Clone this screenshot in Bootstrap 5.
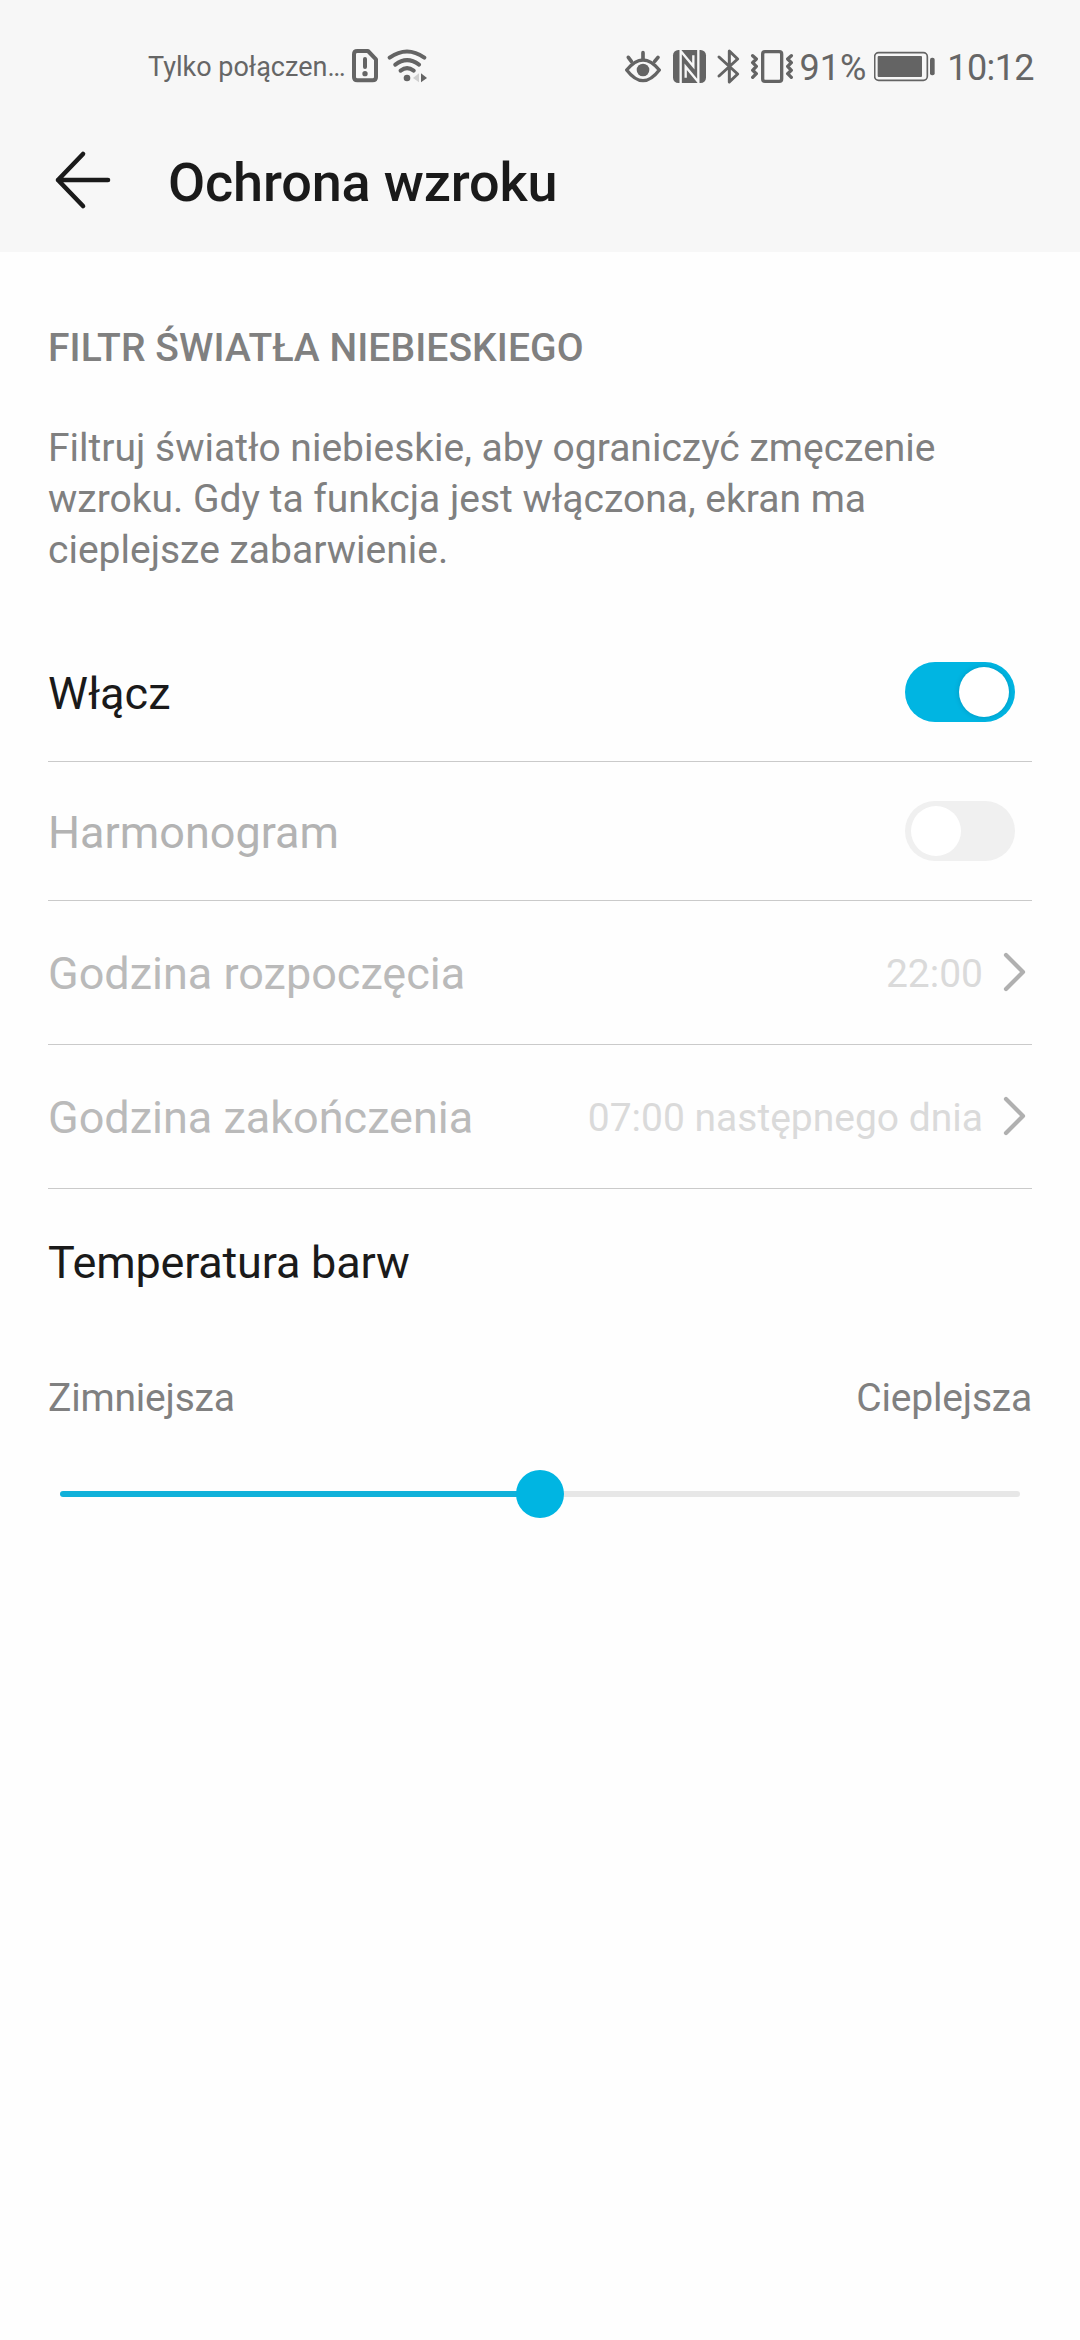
<!DOCTYPE html>
<html lang="pl">
<head>
<meta charset="utf-8">
<meta name="viewport" content="width=device-width, initial-scale=1">
<title>Ochrona wzroku</title>
<link href="https://cdn.jsdelivr.net/npm/bootstrap@5.3.0/dist/css/bootstrap.min.css" rel="stylesheet">
<style>
  body { font-family: Roboto, "Liberation Sans", sans-serif; background: #fefefe; color: #1a1a1a; min-height: 2340px; }
  svg { display: block; flex: none; }
  .app-head { background: #f7f7f7; height: 252px; padding-top: 30px; }
  .status { height: 70px; padding: 0 46px 0 148px; color: #666; }
  .status svg { color: #646464; }
  .operator { font-size: 27px; line-height: 32px; padding-top: 4px; width: 204px; white-space: nowrap; }
  .digits { font-size: 36px; line-height: 42px; padding-top: 5px; white-space: nowrap; }
  .clock { letter-spacing: -.6px; margin-left: 11px; }
  .titlebar { height: 152px; padding-left: 54px; padding-top: 8px; }
  .titlebar h1 { font-size: 54px; font-weight: 500; line-height: 64px; letter-spacing: -.15px; margin: 5px 0 0 54px; white-space: nowrap; }
  .page { padding: 71px 48px 0; }
  .sect { font-size: 39px; font-weight: 500; line-height: 50px; letter-spacing: .08px; color: #808080; margin: 0; }
  .desc { font-size: 39px; line-height: 51px; color: #808080; margin: 50px 0 0; height: 200px; }
  .line { border-bottom: 1px solid #cacaca; height: 139px; }
  .line.tall { height: 144px; }
  .lbl { font-size: 45px; line-height: 54px; padding-top: 3px; }
  .off { color: #b3b3b3; }
  .tall .off { color: #bababa; }
  .val { font-size: 39px; line-height: 46px; padding-top: 2px; color: #dadada; margin-right: 20px; }
  .tgl { width: 110px; height: 60px; padding: 5px 6px; margin-right: 17px; background: #f0f0f0; }
  .tgl.on { background: #00b5e2; }
  .knob { width: 50px; height: 50px; background: #fff; }
  .tgl.on .knob { box-shadow: 0 0 5px rgba(0,60,90,.25); }
  .temp-title { margin-top: 44px; letter-spacing: -.2px; }
  .ends { font-size: 39px; line-height: 46px; letter-spacing: -.2px; color: #808080; margin-top: 85px; }
  .temp { display: block; width: 960px; height: 48px; margin: 49px auto 0; appearance: none; -webkit-appearance: none; background: transparent; }
  .temp::-webkit-slider-runnable-track { height: 6px; border-radius: 3px; background: linear-gradient(to right, #10b1da 50%, #e7e7e7 50%); }
  .temp::-webkit-slider-thumb { -webkit-appearance: none; width: 48px; height: 48px; margin-top: -21px; border-radius: 50%; background: #00b5e2; }
</style>
</head>
<body>
<header class="app-head">
  <div class="status d-flex align-items-center">
    <span class="operator">Tylko połączen…</span>
    <svg width="75" height="70" viewBox="666 0 225 210" fill="none" stroke="currentColor" stroke-linecap="round" stroke-linejoin="round">
      <path d="M682 63H714L738 88V141Q738 151 728 151H682Q672 151 672 141V73Q672 63 682 63Z" stroke-width="12"/>
      <path d="M705 87V111" stroke-width="12"/>
      <circle cx="705" cy="131" r="8" fill="currentColor" stroke="none"/>
      <path d="M779 83Q831 46 883 83M796 104Q831 77 867 104M812 122Q831 107 851 122" stroke-width="12"/>
      <circle cx="831" cy="144" r="10" fill="currentColor" stroke="none"/>
      <path d="M867 130V157L849 144Z" fill="#cfcfcf" stroke="none"/>
      <path d="M873 130L891 144L873 157Z" fill="currentColor" stroke="none"/>
    </svg>
    <div class="d-flex align-items-center ms-auto">
      <svg width="175" height="70" viewBox="45 0 525 210" fill="none" stroke="currentColor" stroke-linecap="round" stroke-linejoin="round">
        <path d="M50 120Q99 60 148 120Q99 184 50 120Z" stroke-width="10"/>
        <circle cx="99" cy="120" r="19" fill="currentColor" stroke="none"/>
        <path d="M99 68V88M55 82L64 94M144 82L134 94" stroke-width="11"/>
        <rect x="189" y="60" width="99" height="99" rx="16" fill="currentColor" stroke="none"/>
        <path d="M212 160V63L250 109V76M265 59V156L227 110V143" stroke="#f7f7f7" stroke-width="7" stroke-linecap="butt" stroke-linejoin="miter"/>
        <path d="M327 81L383 132L358 156V63L383 87L327 138" stroke-width="9"/>
        <rect x="458" y="65" width="57" height="89" rx="7" stroke-width="10"/>
        <path d="M428 77L439 87L428 98L439 109L428 121L439 131L428 142M544 77L533 87L544 98L533 109L544 121L533 131L544 142" stroke-width="10"/>
      </svg>
      <span class="digits">91%</span>
      <svg class="ms-2" width="62" height="70" viewBox="255 0 186 210" fill="none" stroke="currentColor">
        <rect x="257" y="68" width="158" height="83" rx="12" stroke-width="5"/>
        <rect x="266" y="78" width="133" height="63" rx="3" fill="currentColor" stroke="none"/>
        <rect x="423" y="83" width="14" height="53" rx="6" fill="currentColor" stroke="none"/>
      </svg>
      <span class="digits clock">10:12</span>
    </div>
  </div>
  <div class="titlebar d-flex align-items-center">
    <svg width="60" height="60" viewBox="0 0 60 60" fill="none" stroke="#1a1a1a" stroke-width="4.6" stroke-linecap="round" stroke-linejoin="round"><path d="M29 4L4 30L29 56M4 30H54"/></svg>
    <h1>Ochrona wzroku</h1>
  </div>
</header>
<main class="page">
  <h2 class="sect">FILTR ŚWIATŁA NIEBIESKIEGO</h2>
  <p class="desc">Filtruj światło niebieskie, aby ograniczyć zmęczenie<br>wzroku. Gdy ta funkcja jest włączona, ekran ma<br>cieplejsze zabarwienie.</p>

  <div class="line d-flex align-items-center justify-content-between">
    <span class="lbl">Włącz</span>
    <span class="tgl on rounded-pill d-flex justify-content-end" role="switch" aria-checked="true"><span class="knob rounded-circle"></span></span>
  </div>
  <div class="line d-flex align-items-center justify-content-between">
    <span class="lbl off">Harmonogram</span>
    <span class="tgl rounded-pill d-flex" role="switch" aria-checked="false"><span class="knob rounded-circle"></span></span>
  </div>
  <div class="line tall d-flex align-items-center">
    <span class="lbl off me-auto">Godzina rozpoczęcia</span>
    <span class="val">22:00</span>
    <svg width="29" height="44" viewBox="0 0 29 44" fill="none" stroke="#b0b0b0" stroke-width="4.2" stroke-linecap="round" stroke-linejoin="round"><path d="M3 4L20 21L3 38"/></svg>
  </div>
  <div class="line tall d-flex align-items-center">
    <span class="lbl off me-auto">Godzina zakończenia</span>
    <span class="val">07:00 następnego dnia</span>
    <svg width="29" height="44" viewBox="0 0 29 44" fill="none" stroke="#b0b0b0" stroke-width="4.2" stroke-linecap="round" stroke-linejoin="round"><path d="M3 4L20 21L3 38"/></svg>
  </div>
  <section>
    <div class="lbl temp-title">Temperatura barw</div>
    <div class="ends d-flex justify-content-between"><span>Zimniejsza</span><span>Cieplejsza</span></div>
    <input class="temp" type="range" min="0" max="100" value="50" aria-label="Temperatura barw">
  </section>
</main>
<script src="https://cdn.jsdelivr.net/npm/bootstrap@5.3.0/dist/js/bootstrap.bundle.min.js"></script>
</body>
</html>
